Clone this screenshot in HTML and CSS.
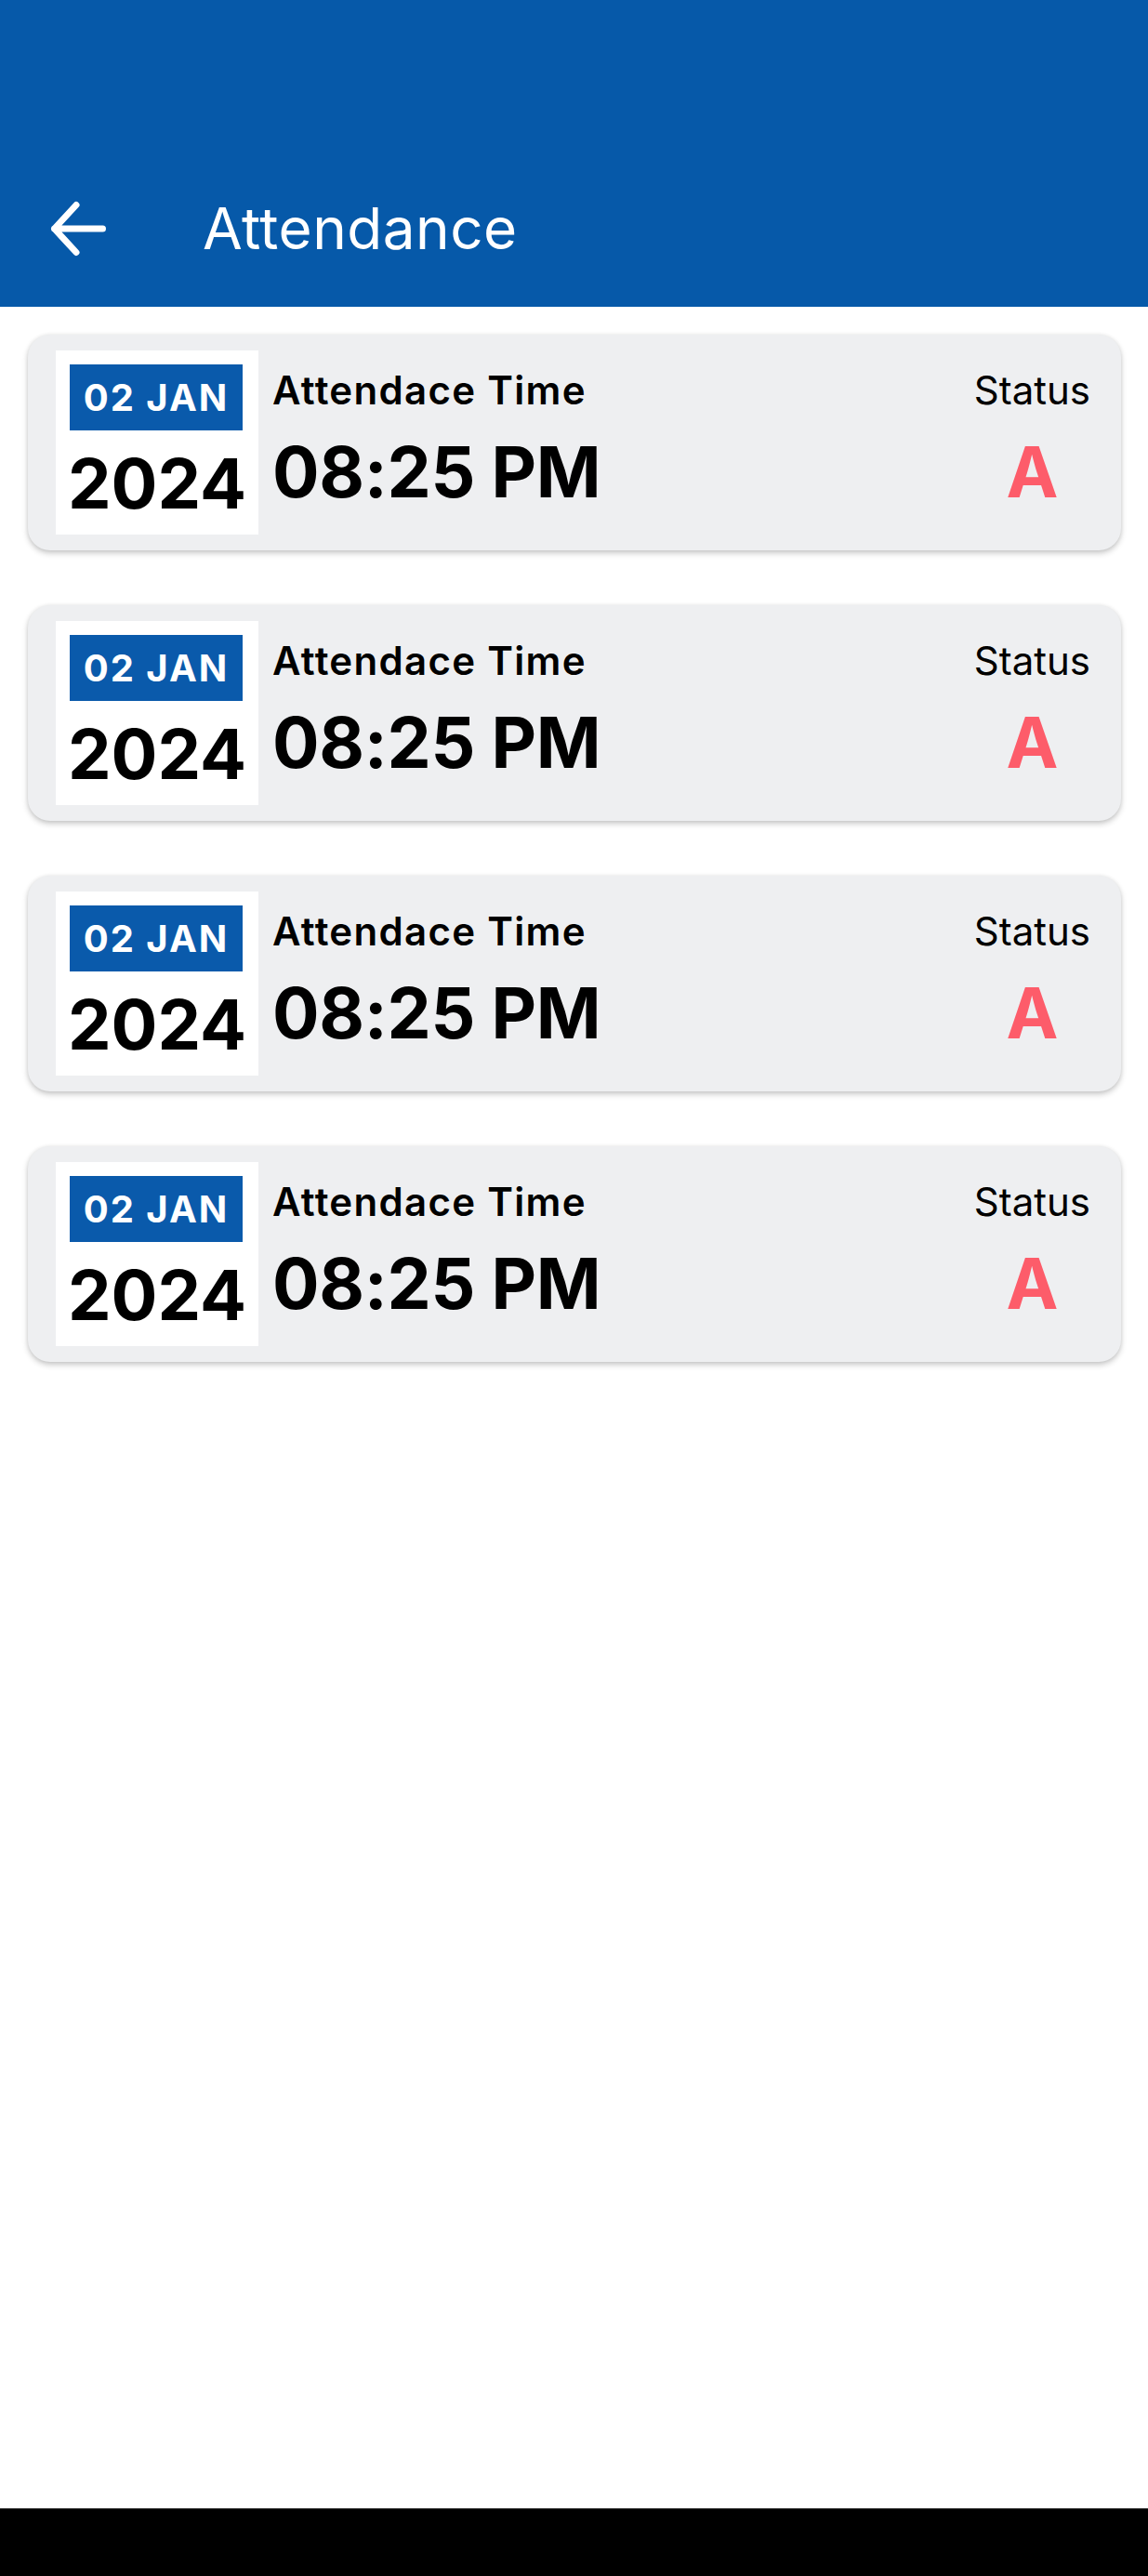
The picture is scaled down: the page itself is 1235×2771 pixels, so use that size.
FILE: index.html
```html
<!DOCTYPE html>
<html lang="en">
<head>
  <meta charset="UTF-8">
  <meta name="viewport" content="width=device-width, initial-scale=1">
  <title>Attendance</title>
  <link rel="stylesheet" href="styles.css">
</head>
<body>

  <div class="screen">
    <header class="app-bar">
      <svg class="back-icon" width="66" height="66" viewBox="0 0 66 66">
        <path d="M6.5 33 L58.5 33 M30 7.5 L6.5 33 L30 58.5" fill="none" stroke="#fff" stroke-width="7" stroke-linecap="round" stroke-linejoin="round"/>
      </svg>
      <h1>Attendance</h1>
    </header>

    <!-- Attendance records -->
    <div class="list">
      <div class="card">
        <div class="date-box">
          <div class="day">02 JAN</div>
          <div class="year">2024</div>
        </div>
        <div class="info">
          <div class="label">Attendace Time</div>
          <div class="time">08:25 PM</div>
        </div>
        <div class="status">
          <div class="status-label">Status</div>
          <div class="status-value">A</div>
        </div>
      </div>

      <div class="card">
        <div class="date-box">
          <div class="day">02 JAN</div>
          <div class="year">2024</div>
        </div>
        <div class="info">
          <div class="label">Attendace Time</div>
          <div class="time">08:25 PM</div>
        </div>
        <div class="status">
          <div class="status-label">Status</div>
          <div class="status-value">A</div>
        </div>
      </div>

      <div class="card">
        <div class="date-box">
          <div class="day">02 JAN</div>
          <div class="year">2024</div>
        </div>
        <div class="info">
          <div class="label">Attendace Time</div>
          <div class="time">08:25 PM</div>
        </div>
        <div class="status">
          <div class="status-label">Status</div>
          <div class="status-value">A</div>
        </div>
      </div>

      <div class="card">
        <div class="date-box">
          <div class="day">02 JAN</div>
          <div class="year">2024</div>
        </div>
        <div class="info">
          <div class="label">Attendace Time</div>
          <div class="time">08:25 PM</div>
        </div>
        <div class="status">
          <div class="status-label">Status</div>
          <div class="status-value">A</div>
        </div>
      </div>
    </div>

    <div class="nav-bar"></div>
  </div>

</body>
</html>
```

FILE: styles.css
```css
* {
  box-sizing: border-box;
}

body {
  margin: 0;
  font-family: Inter, "Noto Sans", sans-serif;
  background-color: #fff;
  color: #000;
}

.screen {
  display: flex;
  flex-direction: column;
  height: 2771px;
}

.app-bar {
  display: flex;
  align-items: center;
  gap: 100px;
  height: 330px;
  padding: 213px 0 51px 52px;
  background-color: #0659a9;
  color: #fff;
}

.back-icon {
  flex-shrink: 0;
}

.app-bar h1 {
  margin: 0;
  font-size: 62px;
  font-weight: 400;
  line-height: 66px;
  letter-spacing: 0.5px;
}

.list {
  flex: 1;
  display: flex;
  flex-direction: column;
  gap: 59px;
  padding: 30px 29px 0 30px;
}

.card {
  display: flex;
  height: 232px;
  padding: 17px 33px 17px 30px;
  background-color: #eeeff1;
  border-radius: 24px;
  box-shadow: 0 3px 6px rgba(0,0,0,0.22), 0 0 4px rgba(0,0,0,0.06);
}

.date-box {
  width: 218px;
  height: 198px;
  padding: 15px 17px 0 15px;
  background-color: #fff;
  text-align: center;
}

.day {
  height: 71px;
  line-height: 71px;
  background-color: #0a5aab;
  color: #fff;
  font-size: 40px;
  font-weight: 700;
  letter-spacing: 2px;
}

.year {
  margin-top: 17px;
  margin-left: -2px;
  line-height: 80px;
  font-size: 74px;
  font-weight: 700;
}

.info {
  flex: 1;
  padding-left: 15px;
}

.label,
.status-label {
  margin-top: 16px;
  line-height: 53px;
  font-size: 42px;
}

.label {
  font-weight: 600;
  letter-spacing: 1.3px;
}

.time,
.status-value {
  margin-top: 17px;
  line-height: 90px;
  font-size: 75px;
  font-weight: 700;
}

.time {
  letter-spacing: -0.3px;
}

.status {
  text-align: center;
}

.status-value {
  color: #fd5c6a;
}

.nav-bar {
  height: 73px;
  background-color: #000;
  border-top: 1px solid #444;
}
```
